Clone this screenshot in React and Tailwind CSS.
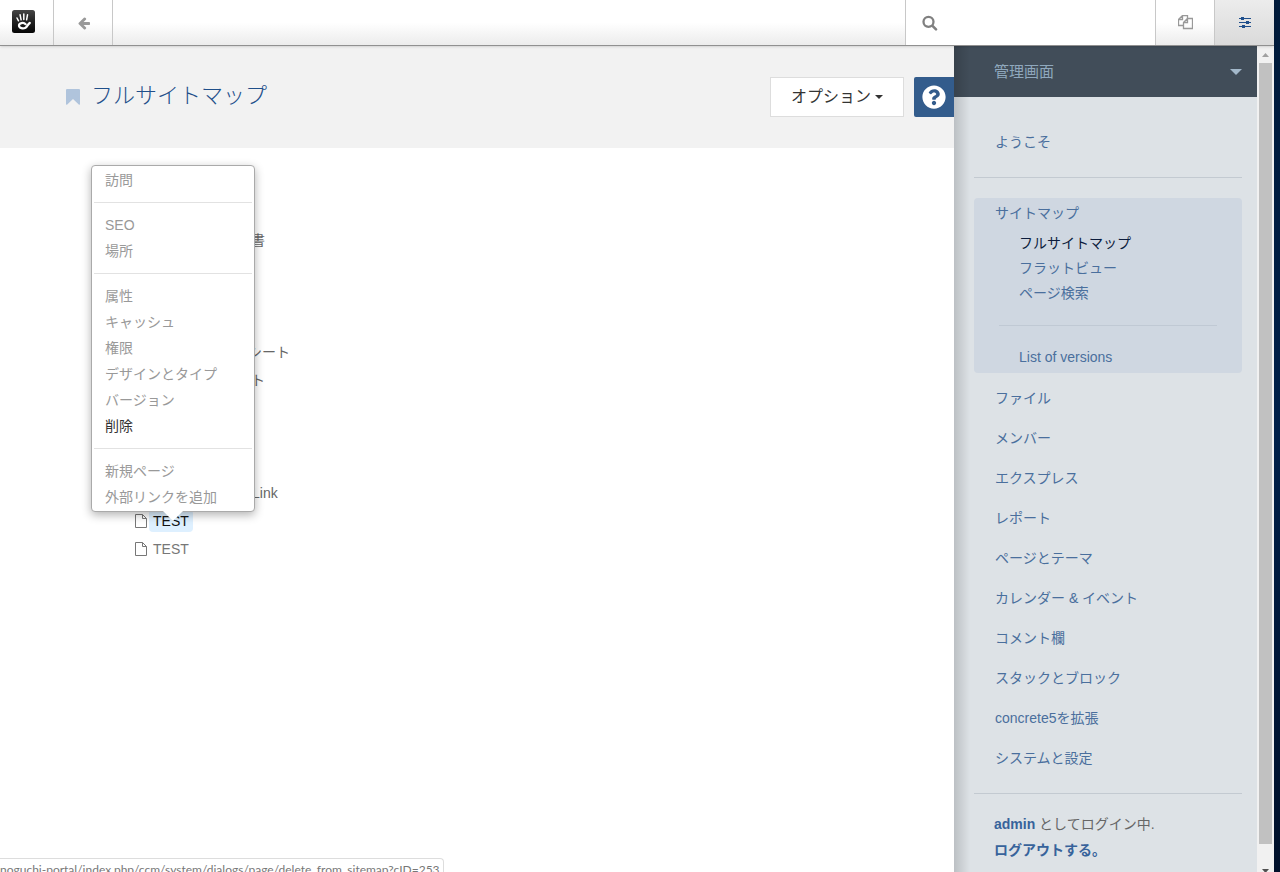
import { FaQuestionCircle } from "react-icons/fa";

const tree = [
  { id: 1, tail: "書", className: "mt-[78px] pl-[251px]" },
  { id: 2, tail: "シート", className: "mt-21 pl-[248px]" },
  { id: 3, tail: "ト", className: "pl-[251px]" },
  { id: 4, tail: "Link", className: "mt-[85px] pl-[252px]" },
  { id: 5, label: "TEST", selected: true },
  { id: 6, label: "TEST" },
];

const menuGroups = [
  ["訪問"],
  ["SEO", "場所"],
  ["属性", "キャッシュ", "権限", "デザインとタイプ", "バージョン", "削除"],
  ["新規ページ", "外部リンクを追加"],
];

const sitemapLinks = ["フルサイトマップ", "フラットビュー", "ページ検索"];

const sections = [
  "ファイル",
  "メンバー",
  "エクスプレス",
  "レポート",
  "ページとテーマ",
  "カレンダー & イベント",
  "コメント欄",
  "スタックとブロック",
  "concrete5を拡張",
  "システムと設定",
];

const HandLogo = () => (
  <svg viewBox="0 0 23 23" className="h-[23px] w-[23px]">
    <defs>
      <linearGradient id="logo" x1="0" y1="0" x2="0" y2="1">
        <stop offset="0" stopColor="#454545" />
        <stop offset="0.5" stopColor="#222" />
        <stop offset="1" stopColor="#050505" />
      </linearGradient>
    </defs>
    <rect width="23" height="23" rx="2.5" fill="url(#logo)" />
    <g fill="none" stroke="#fff" strokeLinecap="round">
      <path d="M5 8l1.500 2.800M8.100 4.800l1 5M11.800 4v5.600M15.500 4.800l-.9 5" strokeWidth="1.500" />
      <path
        d="M13.600 14.200c-2-2.200-6.600-1.200-6.600 1.300 0 2.900 4.300 3.400 6.500 2.200 1.900-1 2.200-3.200 4.300-4.700"
        strokeWidth="2.200"
      />
    </g>
  </svg>
);

const BackIcon = () => (
  <svg viewBox="0 0 1792 1792" className="h-[14px] w-[14px]" fill="#999">
    <path d="M1664 896v128q0 53-32.500 90.500t-84.500 37.500h-704l293 294q38 36 38 90t-38 90l-75 76q-37 37-90 37-52 0-91-37l-651-652q-37-37-37-90 0-52 37-91l651-650q38-38 91-38 52 0 90 38l75 74q38 38 38 91t-38 91l-293 293h704q52 0 84.500 37.500t32.500 90.500z" />
  </svg>
);

const SearchIcon = () => (
  <svg viewBox="0 0 16 16" className="h-4 w-4 shrink-0" fill="none" stroke="#808080" strokeLinecap="round">
    <circle cx="6.500" cy="6.800" r="5" strokeWidth="2.300" />
    <path d="M10.500 10.800l3.500 3.500" strokeWidth="2.600" />
  </svg>
);

const BookmarkIcon = () => (
  <svg viewBox="0 0 14 16" className="h-4 w-[14px]" fill="#b0c4dc">
    <path d="M1 0h12q1 0 1 1v14q0 1-1 .7L7 10 1 15.700Q0 16 0 15V1q0-1 1-1z" />
  </svg>
);

const PageIcon = () => (
  <svg viewBox="0 0 12 14" className="h-[14px] w-3" fill="none" stroke="#777">
    <path d="M.5 .5h7l4 4v9h-11zM7.500 .5v4h4" />
  </svg>
);

const CopyIcon = () => (
  <svg viewBox="0 0 15 15" className="h-[15px] w-[15px]" fill="none" stroke="#999" strokeWidth="1.300">
    <path d="M5.500 10.500h-5v-6l4-4h5v3M4.500 .5v4h-4" />
    <path d="M5.500 7.500l4-4h5v10h-9zM9.500 3.500v4h-4" />
  </svg>
);

const SlidersIcon = () => (
  <svg viewBox="0 0 12 11" className="h-[11px] w-3" fill="#1f4f8c">
    <path d="M0 1h12v1H0zM0 5h12v1H0zM0 9h12v1H0z" />
    <path d="M2 0h3v3H2zM7 4h3v3H7zM3 8h3v3H3z" />
  </svg>
);

const Toolbar = () => (
  <header className="relative z-20 flex h-[46px] shrink-0 border-b border-[#909090] bg-gradient-to-b from-white from-50% to-[#ececec] shadow-sm">
    <a href="#home" aria-label="concrete5" className="flex w-[54px] items-center border-r border-[#c8c8c8] pb-[2px] pl-3">
      <HandLogo />
    </a>
    <button aria-label="戻る" className="flex w-[59px] items-center justify-center border-r border-[#c8c8c8] pl-[2px]">
      <BackIcon />
    </button>
    <div className="flex-1" />
    <label className="flex w-[250px] items-center border-l border-[#c8c8c8] bg-white pl-4">
      <SearchIcon />
      <input type="search" aria-label="検索" className="ml-2 w-full min-w-0 text-sm outline-none" />
    </label>
    <button aria-label="ページ" className="flex w-[59px] items-center justify-center border-l border-[#c8c8c8]">
      <CopyIcon />
    </button>
    <button aria-label="管理画面" className="flex w-[60px] items-center justify-center border-l border-[#c8c8c8] bg-gradient-to-b from-[#ececec] to-[#dadada]">
      <SlidersIcon />
    </button>
  </header>
);

const ContextMenu = () => (
  <div className="absolute top-[17px] left-[91px] z-10 w-[164px] rounded border border-[#aaa] bg-white px-[2px] pb-px shadow-[0_3px_10px_rgba(0,0,0,0.3)]">
    {menuGroups.map((group, i) => (
      <ul key={group[0]} className={i > 0 ? "mt-[9px] border-t border-[#e2e2e2] pt-[9px]" : "pt-px"}>
        {group.map((item) => (
          <li key={item}>
            <button
              className={`block w-full px-[11px] text-left leading-[26px] ${
                item === "削除" ? "text-[#333]" : "text-[#999]"
              }`}
            >
              {item}
            </button>
          </li>
        ))}
      </ul>
    ))}
    <svg viewBox="0 0 22 11" className="absolute top-full left-[70px] h-[11px] w-[22px]">
      <path d="M0 -1h22L11 10z" fill="#fff" />
    </svg>
  </div>
);

const Sitemap = () => (
  <div className="relative flex-1">
    <ul>
      {tree.map((node) =>
        node.tail ? (
          <li key={node.id} className={`h-7 leading-7 text-[#666] ${node.className}`}>
            {node.tail}
          </li>
        ) : (
          <li key={node.id} className="flex h-7 items-center pl-[135px]">
            <PageIcon />
            <a
              href="#page"
              className={`ml-[2px] rounded-sm px-1 leading-[22px] ${
                node.selected ? "bg-[#def0ff] text-[#111]" : "text-[#777]"
              }`}
            >
              {node.label}
            </a>
          </li>
        )
      )}
    </ul>
    <ContextMenu />
  </div>
);

const DashboardPanel = () => (
  <aside className="relative w-[303px] shrink-0 overflow-hidden bg-[#dde2e6] text-[#4a6f9d]">
    <button className="flex h-[51px] w-full items-center justify-between bg-[#414d59] pr-[15px] pl-10 text-[15px] text-[#8fa8bd]">
      管理画面
      <svg viewBox="0 0 12 6" className="h-[6px] w-3" fill="#a3b8ca">
        <path d="M0 0h12L6 6z" />
      </svg>
    </button>
    <nav className="mr-[15px] ml-5">
      <a href="#welcome" className="mt-[25px] block px-[21px] leading-10">
        ようこそ
      </a>
      <hr className="mt-[15px] border-[#c3cad1]" />
      <div className="mt-5 rounded bg-[#cfd7e1] pb-[3px]">
        <a href="#sitemap" className="block px-[21px] leading-[30px]">
          サイトマップ
        </a>
        <ul className="pt-[3px] pl-[45px]">
          {sitemapLinks.map((item, i) => (
            <li key={item} className="leading-[25px]">
              <a href="#sitemap" className={i === 0 ? "text-[#0c1c3c]" : ""}>
                {item}
              </a>
            </li>
          ))}
        </ul>
        <hr className="mx-[25px] mt-[19px] border-[#c0c9d4]" />
        <a href="#versions" className="mt-[19px] block pl-[45px] leading-[25px]">
          List of versions
        </a>
      </div>
      <ul className="pt-[5px]">
        {sections.map((item) => (
          <li key={item}>
            <a href="#section" className="block px-[21px] leading-10">
              {item}
            </a>
          </li>
        ))}
      </ul>
      <hr className="mt-[15px] border-[#c3cad1]" />
    </nav>
    <p className="mt-[17px] pl-10 leading-[26px] text-[#666]">
      <a href="#account" className="font-bold text-[#37639b]">admin</a> としてログイン中.
      <br />
      <a href="#logout" className="font-bold text-[#37639b]">ログアウトする。</a>
    </p>
    <div className="pointer-events-none absolute inset-y-0 left-0 w-4 bg-gradient-to-r from-black/15 to-transparent" />
  </aside>
);

const Scrollbar = () => (
  <div className="flex w-[17px] shrink-0 flex-col items-center bg-[#f1f1f1]">
    <svg viewBox="0 0 17 17" className="h-[17px] w-[17px]" fill="#a0a0a0">
      <path d="M5 11h7L8.500 7z" />
    </svg>
    <div className="w-[13px] flex-1 bg-[#c1c1c1]" />
    <svg viewBox="0 0 17 28" className="h-7 w-[17px]" fill="#505050">
      <path d="M5 25h7l-3.500 4z" />
    </svg>
  </div>
);

export default function App() {
  return (
    <div className="flex h-screen overflow-hidden bg-white font-['Liberation_Sans','Noto_Sans_CJK_JP',sans-serif] text-sm">
      <div className="relative flex min-w-0 flex-1 flex-col">
        <Toolbar />
        <div className="flex min-h-0 flex-1">
          <main className="flex min-w-0 flex-1 flex-col">
            <div className="flex h-[102px] shrink-0 items-center bg-[#f2f2f2] pl-[66px]">
              <BookmarkIcon />
              <h1 className="ml-[11px] pb-[2px] text-[22px] font-light text-[#1f4f8a]">フルサイトマップ</h1>
              <button className="ml-auto flex h-10 w-[134px] items-center justify-center gap-1 border border-[#ddd] bg-white text-base text-[#333]">
                オプション
                <svg viewBox="0 0 8 4" className="h-1 w-2" fill="#333">
                  <path d="M0 0h8L4 4z" />
                </svg>
              </button>
              <button aria-label="ヘルプ" className="ml-[10px] flex h-10 w-10 items-center justify-center rounded-l-xs bg-[#335c8c] text-white">
                <FaQuestionCircle className="h-6 w-6" />
              </button>
            </div>
            <Sitemap />
          </main>
          <DashboardPanel />
          <Scrollbar />
        </div>
        <div className="absolute bottom-0 left-0 z-30 h-[14px] overflow-hidden rounded-tr border-t border-r border-[#ddd] bg-white pr-[3px] font-[Lato,sans-serif] text-xs leading-[22px] whitespace-nowrap text-[#777]">
          noguchi-portal/index.php/ccm/system/dialogs/page/delete_from_sitemap?cID=253
        </div>
      </div>
      <div className="w-[6px] shrink-0 bg-gradient-to-b from-[#001a3a] via-[#00204a] to-[#00102a]" />
    </div>
  );
}
